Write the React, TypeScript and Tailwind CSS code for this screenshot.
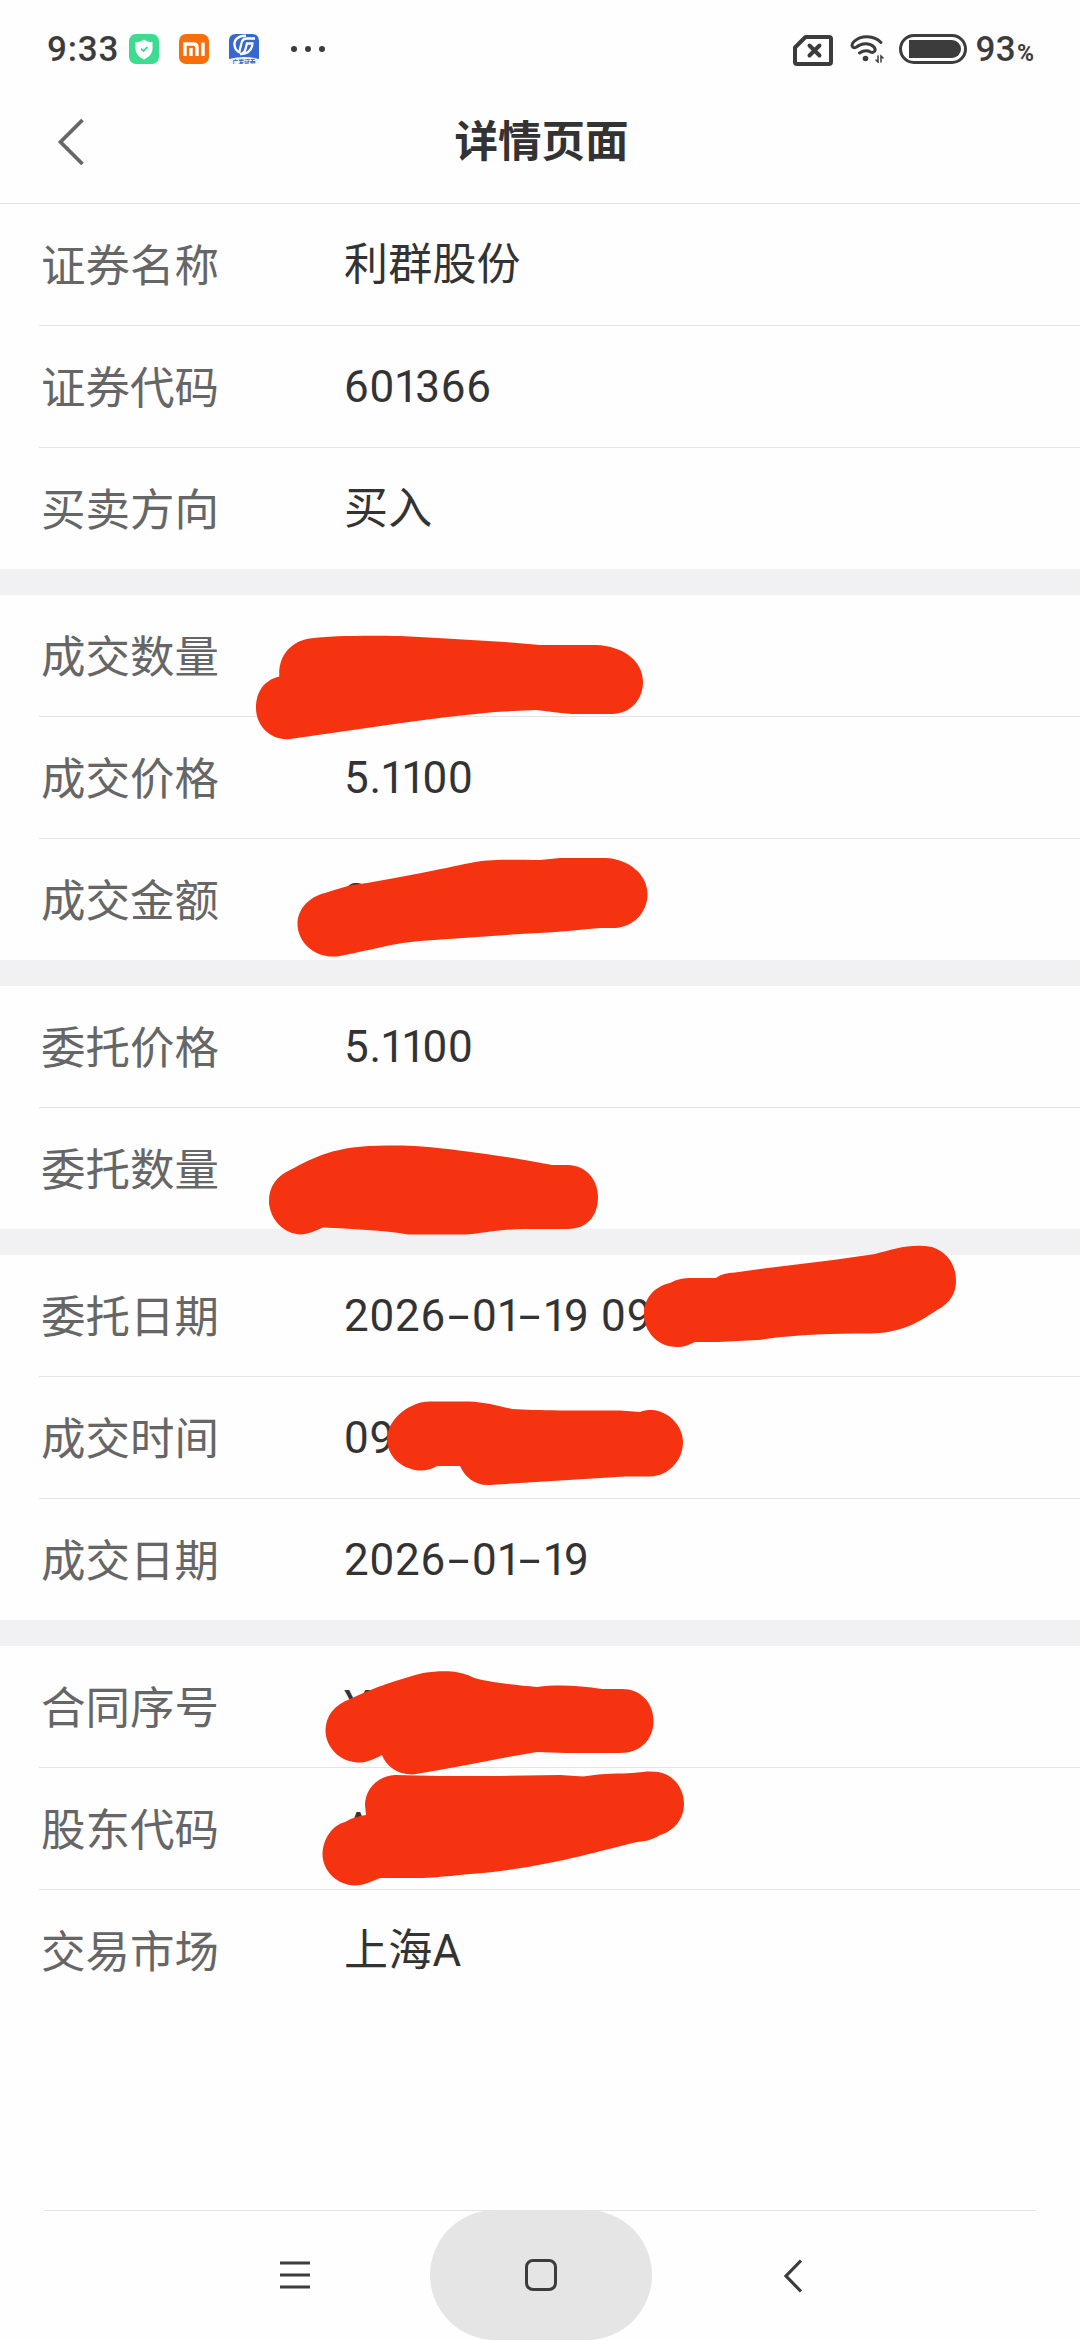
const SECTIONS = [
  [
    { label: '证券名称', value: '利群股份' },
    { label: '证券代码', value: '601366' },
    { label: '买卖方向', value: '买入' },
  ],
  [
    { label: '成交数量', value: '' },
    { label: '成交价格', value: '5.1100' },
    { label: '成交金额', value: '2' },
  ],
  [
    { label: '委托价格', value: '5.1100' },
    { label: '委托数量', value: '' },
  ],
  [
    { label: '委托日期', value: '2026-01-19 09' },
    { label: '成交时间', value: '09' },
    { label: '成交日期', value: '2026-01-19' },
  ],
  [
    { label: '合同序号', value: 'Y' },
    { label: '股东代码', value: 'A' },
    { label: '交易市场', value: '上海A' },
  ],
];

// Marker strokes hiding the private values, in page coordinates
const MARKS = [
  'M279.3 676.5C278 656 291 641 310 638.5C330 635.5 370 635.5 400 636C440 638 470 640 505 642L540 645H595C625 646 643 662 643 682C643 700 630 714 612 714H572C556 713 548 711 536 710L495 712C430 718 360 729 290 739C271 741 256 726 256 708C256 692 264 680 279.3 676.5Z',
  'M297.5 924C297.5 910 308 897 325 893C338 889 348 885 360 884C405 877 450 867 475 862C495 859 515 860 540 860L560 858H606C628 859 647.5 874 647.5 894C647.5 913 633 927 615 928H600C570 931 545 933 520 934L420 941C395 943 380 948 340 956C315 960 297.5 942 297.5 924Z',
  'M269 1201C269 1186 277 1176 290 1170C315 1157 335 1145 390 1145.5C430 1144 510 1157 552 1165H568C585 1165 598 1179 598 1197C598 1215 588 1229 568 1229H525C500 1229 480 1234 465 1234.5H408C385 1230 350 1229 323 1227.5C315 1231 308 1234 301 1234.5C283 1234 269 1218 269 1201Z',
  'M644 1314C644 1299 653 1287 670 1283C677 1279 684 1278 692 1278H716C721 1274 727 1273 735 1272.5C780 1266 830 1261 875 1254C893 1249 912 1243 932 1247C946 1252 956 1263 956 1281C956 1292 951 1303 937 1310C915 1325 898 1333 870 1333.5C830 1333.5 800 1334 758 1340L718 1342H695C689 1345 684 1347 677 1347C658 1347 644 1332 644 1314Z',
  'M387 1438C388 1424 399 1411 414 1405C420 1402 425 1401.5 432 1401.5H468C486 1402 498 1406 512 1409C525 1410 540 1410 560 1410.5H620L640 1412C643 1410.5 647 1410 652 1410C669 1411 683 1426 683 1442C683 1460 669 1476 650 1476.5H625L490 1485C475 1486 465 1477 460 1466H437C430 1470 425 1471 418 1470.5C400 1468 387 1456 387 1438Z',
  'M325.5 1730C326 1716 334 1705 350 1699C375 1687 400 1679 423 1673C445 1670 460 1671 472 1677C485 1682 515 1685 537 1687C560 1684 580 1686 602 1689H622C640 1689 653.5 1702 653.5 1721C653.5 1740 640 1753 620 1753H565L537 1752C500 1758 460 1767 413 1774.5C398 1775 386 1766 382 1755C370 1761 365 1763 357 1762.5C339 1761 325.5 1747 325.5 1730Z',
  'M322.5 1854C323 1838 333 1825 345 1822C352 1818 358 1816 366 1815L365 1805C365 1789 378 1776 395 1775L440 1776H500L560 1775L583 1776.5C605 1773 620 1774 632 1773C645 1771.5 652 1771 658 1772C673 1774 684 1788 684 1804C684 1819 674 1831 660 1835C650 1841 645 1841 637 1842C595 1852 545 1868 470 1874C440 1877 430 1878 418 1878H380C370 1882 365 1885 355 1885.5C337 1885 322.5 1871 322.5 1854Z',
];

function StatusBar() {
  return (
    <div className="flex h-[98px] items-center pl-[47px] pr-[46px] text-[35px] font-medium leading-none text-[#3c3c3c]">
      <span className="w-[82px] tracking-[0.8px]">9:33</span>

      {/* Notification icons */}
      <div className="flex items-center gap-5">
        <svg className="size-[30px]" viewBox="0 0 30 30">
          <rect width="30" height="30" rx="7" fill="#3ddc91" />
          <path d="M15 5.5C17.500 7.500 20 8 23.500 8V14.500C23.500 19.500 20 23 15 25.500C10 23 6.500 19.500 6.500 14.500V8C10 8 12.500 7.500 15 5.500Z" fill="#fff" />
          <path d="M12 14.800L14.500 17L18.500 13" fill="none" stroke="#3ddc91" strokeWidth="1.800" />
        </svg>
        <svg className="size-[30px]" viewBox="0 0 30 30">
          <rect width="30" height="30" rx="7" fill="#f66f0c" />
          <path d="M6 22V10H14.500Q18 10 18 13.500V22M12 14V22M24 8.500V22" fill="none" stroke="#fff" strokeWidth="3.400" />
        </svg>
        <svg className="size-[30px]" viewBox="0 0 30 30">
          <path d="M0 7Q0 0 7 0H23Q30 0 30 7V25H0Z" fill="#3767cf" />
          <path d="M17 1.800C9 1.500 5 6 5.500 11C6 15.500 8 17.500 11 18.500" fill="none" stroke="#fff" strokeWidth="2.400" />
          <path d="M26 4.500H18Q13.500 4.500 12.500 9L10 19M24.500 9.500H18L16.500 15Q15.500 19.500 11 20Q21 20.500 23.500 11" fill="none" stroke="#fff" strokeWidth="2.300" />
          <path d="M0 25Q15 21 30 25V30H0Z" fill="#f1f5ff" />
          <text x="15" y="29.500" textAnchor="middle" fontSize="5.800" fontWeight="700" fill="#2f5fc4">广发证券</text>
        </svg>
      </div>
      <div className="ml-[32px] flex gap-2">
        <i className="size-1.5 rounded-full bg-[#3c3c3c]" />
        <i className="size-1.5 rounded-full bg-[#3c3c3c]" />
        <i className="size-1.5 rounded-full bg-[#3c3c3c]" />
      </div>

      <div className="ml-auto flex items-center">
        <svg className="mt-0.5 h-[31px] w-10" viewBox="0 0 40 31" fill="none" stroke="#3c3c3c">
          <path d="M12.500 2H36Q38 2 38 4V27Q38 29 36 29H4Q2 29 2 27V12.500Z" strokeWidth="4" strokeLinejoin="round" />
          <path d="M16.500 10.500L26.500 20.500M26.500 10.500L16.500 20.500" strokeWidth="4" strokeLinecap="round" />
        </svg>
        <svg className="ml-[17px] h-7 w-[34px]" viewBox="0 0 34 28" fill="none" stroke="#3c3c3c" strokeWidth="3" strokeLinecap="round">
          <path d="M31 7.500C24 0 11 0 4 6.500C0 11 3 14 6.500 12C12 7.500 20 8 24 12C27 16 23 18.500 20.500 17C17 15 13.500 15.500 9.500 18" />
          <circle cx="15.500" cy="23.500" r="2.800" fill="#3c3c3c" stroke="none" />
          <path d="M28 21V27L26 25M31 27V21L33 23" strokeWidth="1.500" />
        </svg>
        <div className="ml-[15px] flex h-[30px] w-[68px] items-center rounded-full border-[3px] border-[#3c3c3c] pl-[7px]">
          <div className="h-[18px] w-[52px] rounded-l-[4px] rounded-r-full bg-[#3c3c3c]" />
        </div>
        <span className="ml-2 tracking-[0.4px]">93</span>
        <span className="mt-2 ml-px text-[23px] font-bold">%</span>
      </div>
    </div>
  );
}

// Numbers are set with a narrow 1 and a wide hyphen
function Value({ text }: { text: string }) {
  if (!/^[\d.\- ]+$/.test(text)) return <span className="tracking-[0.2px]">{text}</span>;
  return (
    <span className="whitespace-pre tracking-[0.8px]">
      {text.split(/(1+|-|\.)/).map((part, i) => {
        if (part.startsWith('1')) return <span key={i} className="-ml-px tracking-[-3.6px]">{part}</span>;
        if (part === '.') return <span key={i} className="tracking-normal">.</span>;
        if (part === '-') return <span key={i} className="mx-[6.5px] inline-block scale-x-[1.8]">-</span>;
        return part;
      })}
    </span>
  );
}

export default function App() {
  return (
    <div
      className="relative flex h-[2340px] w-[1080px] flex-col overflow-hidden bg-[#fefefe] font-[Roboto,'Noto_Sans_CJK_SC',sans-serif]"
      lang="zh-CN"
    >
      <StatusBar />

      <header className="grid h-[106px] grid-cols-[1fr_auto_1fr] items-center border-b border-[#e3e3e3] pb-[18px]">
        <svg className="ml-[56px] h-[48px] w-[30px]" viewBox="0 0 30 48" fill="none" stroke="#666" strokeWidth="3.800">
          <path d="M26.500 2L4.500 24L26.500 46" />
        </svg>
        <h1 className="pt-0.5 pl-[3px] text-[43.500px] font-bold leading-none text-[#333]">详情页面</h1>
      </header>

      <main className="flex flex-col gap-[26px] bg-[#f1f1f4]">
        {SECTIONS.map((rows, i) => (
          <section key={i} className="divide-y divide-[#e3e3e3] bg-[#fefefe]">
            {rows.map(row => (
              <div key={row.label} className="ml-[39px] flex h-[122px] items-center border-[#e3e3e3] last:h-[121px]">
                <span className="w-[305px] pt-[5px] pl-0.5 text-[44.500px] leading-none text-[#666]">{row.label}</span>
                <span className="text-[44px] leading-none text-[#333]">
                  <Value text={row.value} />
                </span>
              </div>
            ))}
          </section>
        ))}
      </main>

      <nav className="mt-auto flex h-[130px] items-center justify-center">
        <div className="relative flex h-full w-[992px] items-center justify-center border-t border-[#e3e3e3]">
          <svg className="h-[34px] w-[32px]" viewBox="0 0 32 34" stroke="#3c3c3c" strokeWidth="3.200">
            <path d="M1 4H31M1 16H31M1 28H31" />
          </svg>
          <div className="-mt-px mr-[132px] ml-[119px] flex h-[130px] w-[222px] items-center justify-center rounded-[65px] bg-[#e5e5e5]">
            <div className="size-8 rounded-[8px] border-[3.500px] border-[#3c3c3c]" />
          </div>
          <svg className="h-[34px] w-[18px]" viewBox="0 0 18 34" fill="none" stroke="#3c3c3c" strokeWidth="3.200">
            <path d="M17 1.500L2 17L17 32.500" />
          </svg>
        </div>
      </nav>

      {/* Redaction marks */}
      <svg className="pointer-events-none absolute inset-0 h-[2340px] w-[1080px]" viewBox="0 0 1080 2340" fill="#f63310">
        {MARKS.map(d => (
          <path key={d} d={d} />
        ))}
      </svg>
    </div>
  );
}
